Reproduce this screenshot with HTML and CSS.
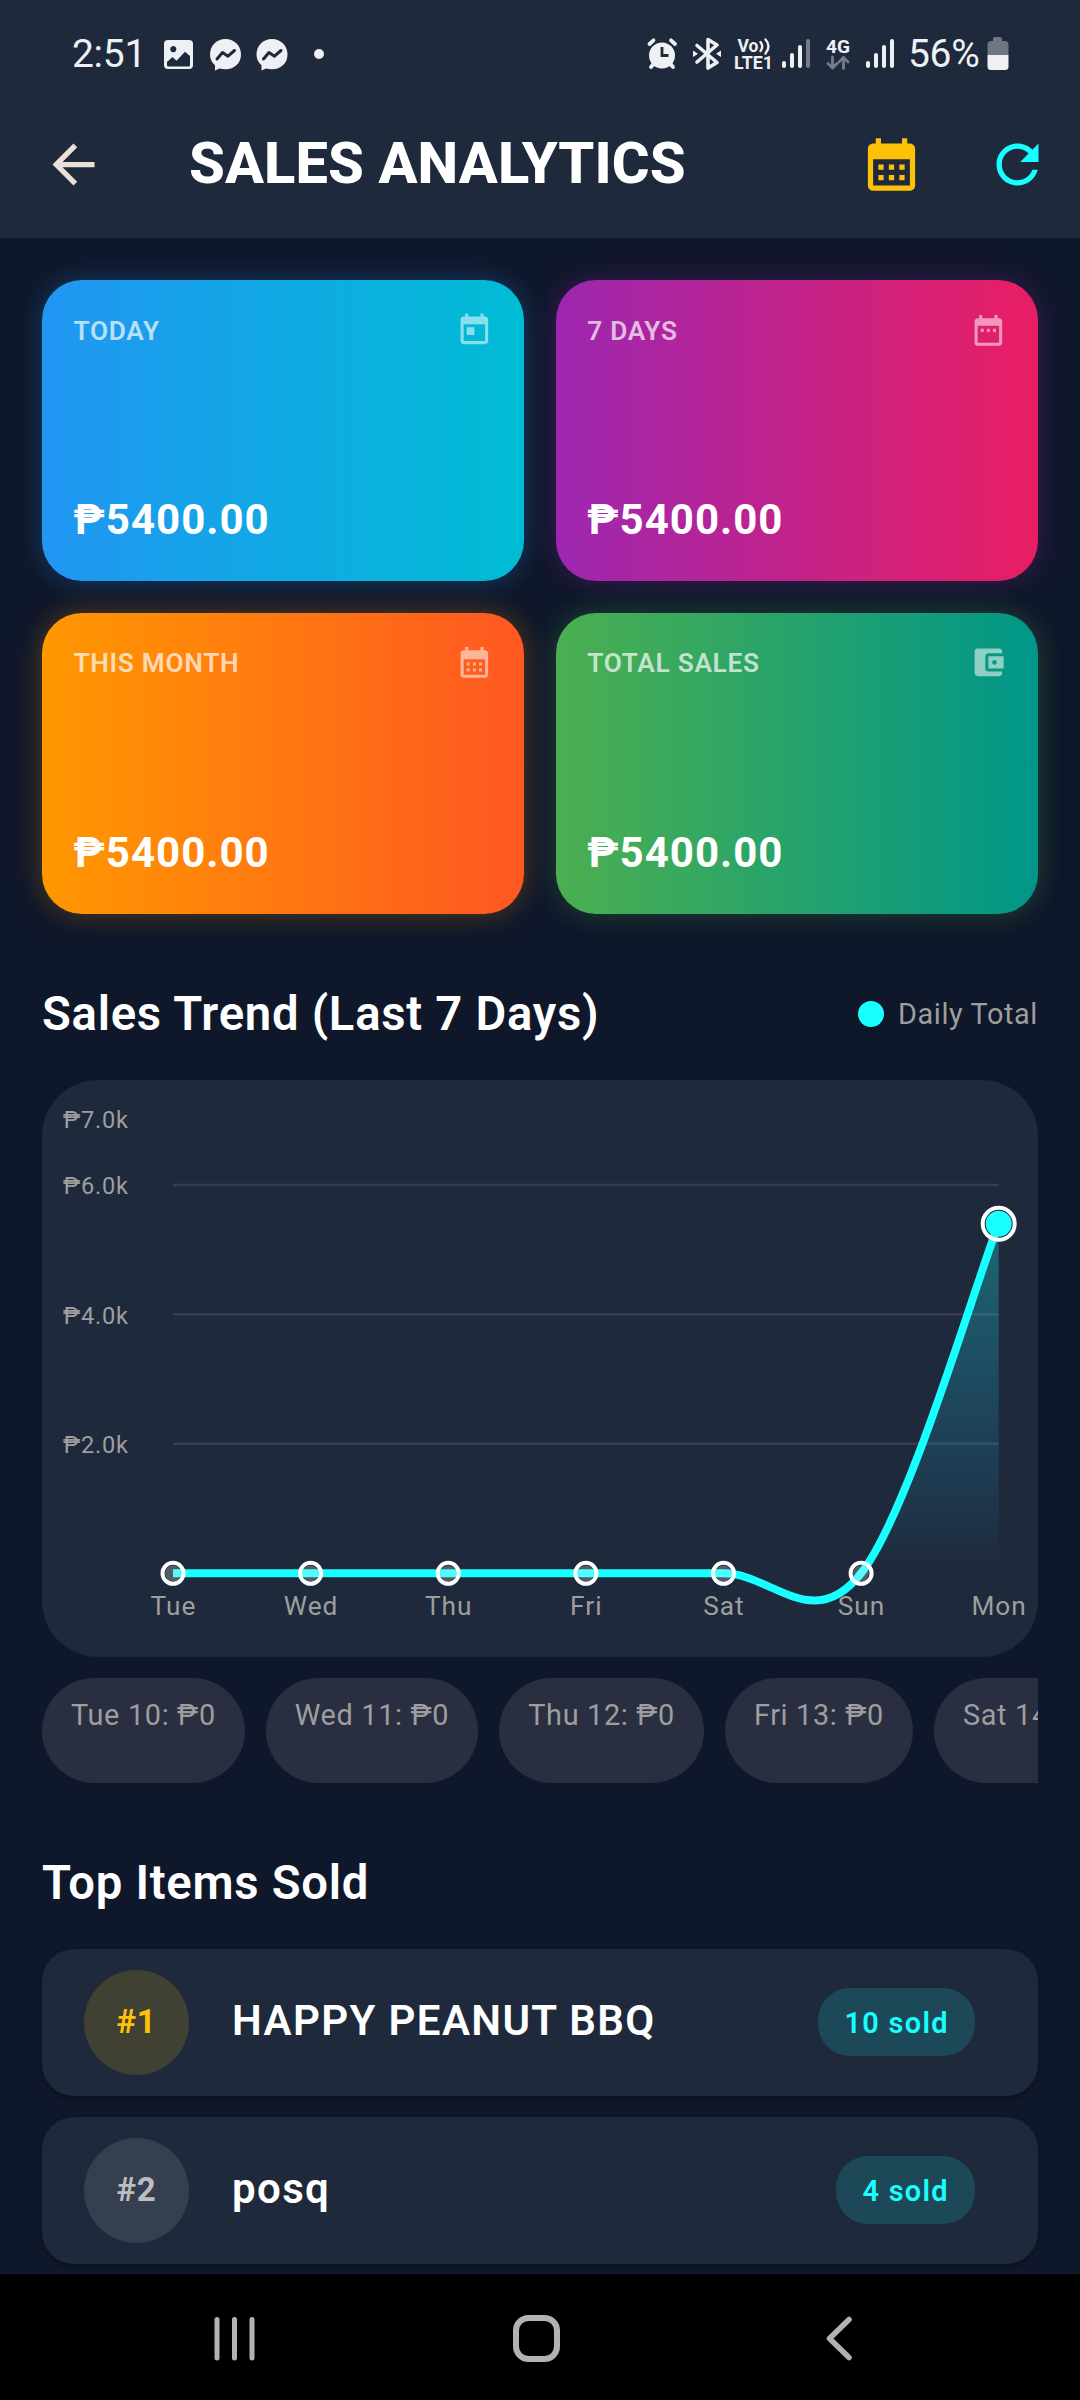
FILE: index.html
```html
<!DOCTYPE html>
<html lang="en">
<head>
<meta charset="utf-8">
<title>Sales Analytics</title>
<link rel="stylesheet" href="styles.css">
</head>
<body>
<div class="screen">
  <header class="top">
    <div class="status">
      <span class="clock">2:51</span>
      <svg class="status-left" width="170" height="40" viewBox="0 0 170 40">
        <path fill="#eef0f3" fill-rule="evenodd" d="M7 6h21a4 4 0 0 1 4 4v21a4 4 0 0 1-4 4H7a4 4 0 0 1-4-4V10a4 4 0 0 1 4-4zM12.300 12a3.100 3.100 0 1 0 .01 0zM6 28v3q0 1.500 1.500 1.500h20q1.500 0 1.500-1.500v-9l-5-4.300-8.500 9-4-3.700z"/>
        <g id="m1">
          <path fill="#eef0f3" d="M64.500 5C55.500 5 49 11.500 49 20.500c0 4.500 1.800 8 5 10.800v5.200l4.600-2q2.800.8 5.900.8C73.500 35.300 80 29 80 20.500S73.500 5 64.500 5z"/>
          <path fill="none" stroke="#1e293b" stroke-width="3" stroke-linejoin="round" stroke-linecap="round" d="M56 25l5.500-6.500 5.500 3.700L73.500 16.500"/>
        </g>
        <use href="#m1" x="46.500"/>
        <circle cx="158" cy="20" r="5" fill="#eef0f3"/>
      </svg>
      <svg class="status-right" width="256" height="40" viewBox="0 0 256 40" fill="#eef0f3">
        <circle cx="21" cy="21.500" r="13"/>
        <path stroke="#eef0f3" stroke-width="3.800" stroke-linecap="round" d="M8.500 10l4-3.700M34 10l-4-3.700M10 33l2.500-3M32 33l-2.500-3"/>
        <path fill="none" stroke="#1e293b" stroke-width="2.800" d="M21 13v8.500h6.500"/>
        <path fill="none" stroke="#eef0f3" stroke-width="3.600" stroke-linejoin="round" stroke-linecap="round" d="M56 11.500L76 28.500 67 34V5.500l9 5.500L56 28"/>
        <path d="M52 16.500l5 3.300-5 3.300zM80 16.500l-5 3.300 5 3.300z"/>
        <text class="tiny" x="96.500" y="18" textLength="21" lengthAdjust="spacingAndGlyphs" font-size="18">Vo</text>
        <path fill="none" stroke="#eef0f3" stroke-width="2.400" stroke-linecap="round" d="M119.500 8q3.500 4.500 0 9M124.500 5.500q6 6.500 0 14"/>
        <text class="tiny" x="93" y="35" textLength="39" lengthAdjust="spacingAndGlyphs" font-size="18.500">LTE1</text>
        <rect x="141" y="27" width="4" height="7" rx="2"/><rect x="149" y="19" width="4" height="15" rx="2"/><rect x="157" y="11" width="4" height="23" rx="2"/><rect x="165" y="5" width="4" height="29" rx="2" fill="#767d89"/>
        <text class="tiny" x="185" y="18.500" textLength="24" lengthAdjust="spacingAndGlyphs" font-size="19">4G</text>
        <path fill="none" stroke="#767d89" stroke-width="2.800" stroke-linecap="round" stroke-linejoin="round" d="M191.500 23v11M187 29.500l4.500 4.500 4.500-4.500M202.500 34.500v-11M198 28l4.500-4.500 4.500 4.500"/>
        <rect x="225" y="27" width="4" height="7" rx="2"/><rect x="233" y="19" width="4" height="15" rx="2"/><rect x="241" y="11" width="4" height="23" rx="2"/><rect x="249" y="5" width="4" height="29" rx="2"/>
      </svg>
      <span class="percent">56%</span>
      <svg class="battery" width="22" height="40" viewBox="0 0 22 40">
        <path fill="#6f7682" d="M8 3h5a2 2 0 0 1 2 2v2h3a3.500 3.500 0 0 1 3.500 3.500V21H.5V10.500A3.500 3.500 0 0 1 4 7h2V5a2 2 0 0 1 2-2z"/>
        <path fill="#eef0f3" d="M.5 21h21v11.500a3.500 3.500 0 0 1-3.500 3.500H4a3.500 3.500 0 0 1-3.500-3.500z"/>
      </svg>
    </div>
    <div class="appbar">
      <span class="bar-btn lead"><svg class="icon" viewBox="0 0 24 24" fill="#ebe0d6"><path d="M20 11H7.830l5.590-5.590L12 4l-8 8 8 8 1.410-1.410L7.830 13H20v-2z"/></svg></span>
      <h1>SALES ANALYTICS</h1>
      <span class="bar-btn"><svg class="icon" viewBox="0 0 24 24" fill="#ffc107"><path d="M19 4h-1V2h-2v2H8V2H6v2H5c-1.110 0-1.990.9-1.990 2L3 20a2 2 0 0 0 2 2h14c1.100 0 2-.9 2-2V6c0-1.100-.9-2-2-2zm0 16H5V10h14v10zM9 14H7v-2h2v2zm4 0h-2v-2h2v2zm4 0h-2v-2h2v2zm-8 4H7v-2h2v2zm4 0h-2v-2h2v2zm4 0h-2v-2h2v2z"/></svg></span>
      <span class="bar-btn"><svg class="icon" viewBox="0 0 24 24" fill="#18ffff"><path d="M17.650 6.350C16.200 4.900 14.210 4 12 4c-4.420 0-7.990 3.580-7.990 8s3.570 8 7.990 8c3.730 0 6.840-2.550 7.730-6h-2.080c-.82 2.330-3.040 4-5.650 4-3.310 0-6-2.690-6-6s2.690-6 6-6c1.660 0 3.140.69 4.220 1.780L13 11h7V4l-2.350 2.350z"/></svg></span>
    </div>
  </header>

  <main>
    <section class="cards">
      <article class="card today">
        <div class="card-head"><span>TODAY</span><svg class="mini" viewBox="0 0 24 24"><path d="M19 3h-1V1h-2v2H8V1H6v2H5c-1.110 0-1.990.9-1.990 2L3 19a2 2 0 0 0 2 2h14c1.100 0 2-.9 2-2V5c0-1.100-.9-2-2-2zm0 16H5V8h14v11zM7 10h5v5H7z"/></svg></div>
        <strong>₱5400.00</strong>
      </article>
      <article class="card week">
        <div class="card-head"><span>7 DAYS</span><svg class="mini" viewBox="0 0 24 24"><path d="M9 11H7v2h2v-2zm4 0h-2v2h2v-2zm4 0h-2v2h2v-2zm2-7h-1V2h-2v2H8V2H6v2H5c-1.110 0-1.990.9-1.990 2L3 20a2 2 0 0 0 2 2h14c1.100 0 2-.9 2-2V6c0-1.100-.9-2-2-2zm0 16H5V9h14v11z"/></svg></div>
        <strong>₱5400.00</strong>
      </article>
      <article class="card month">
        <div class="card-head"><span>THIS MONTH</span><svg class="mini" viewBox="0 0 24 24"><path d="M19 4h-1V2h-2v2H8V2H6v2H5c-1.110 0-1.990.9-1.990 2L3 20a2 2 0 0 0 2 2h14c1.100 0 2-.9 2-2V6c0-1.100-.9-2-2-2zm0 16H5V10h14v10zM9 14H7v-2h2v2zm4 0h-2v-2h2v2zm4 0h-2v-2h2v2zm-8 4H7v-2h2v2zm4 0h-2v-2h2v2zm4 0h-2v-2h2v2z"/></svg></div>
        <strong>₱5400.00</strong>
      </article>
      <article class="card total">
        <div class="card-head"><span>TOTAL SALES</span><svg class="mini" viewBox="0 0 24 24"><path d="M21 18v1c0 1.100-.9 2-2 2H5c-1.110 0-2-.9-2-2V5c0-1.100.89-2 2-2h14c1.100 0 2 .9 2 2v1h-9c-1.110 0-2 .9-2 2v8c0 1.100.89 2 2 2h9zm-9-2h10V8H12v8zm4-2.500c-.83 0-1.500-.67-1.500-1.500s.67-1.500 1.500-1.500 1.500.67 1.500 1.500-.67 1.500-1.500 1.500z"/></svg></div>
        <strong>₱5400.00</strong>
      </article>
    </section>

    <div class="section-head">
      <h2>Sales Trend (Last 7 Days)</h2>
      <span class="legend"><i class="dot"></i><span>Daily Total</span></span>
    </div>

    <section class="chart">
      <svg width="996" height="577" viewBox="0 0 996 577">
        <defs>
          <linearGradient id="area" gradientUnits="userSpaceOnUse" x1="0" y1="144" x2="0" y2="493">
            <stop offset="0" stop-color="#18ffff" stop-opacity=".3"/>
            <stop offset=".76" stop-color="#20c8ff" stop-opacity=".1"/>
            <stop offset="1" stop-color="#20c8ff" stop-opacity="0"/>
          </linearGradient>
        </defs>
        <path stroke="#fff" stroke-opacity=".1" stroke-width="2.600" d="M131 105h825.700M131 234.300h825.700M131 363.700h825.700"/>
        <path fill="url(#area)" d="M819.100 493.300C867.200 432.100 932.600 205 956.700 143.800V493.300z"/>
        <path fill="none" stroke="#18ffff" stroke-width="7.900" d="M131 493.300H681.500C729.600 493.300 771 554.500 819.100 493.300 867.200 432.100 932.600 205 956.700 143.800"/>
        <g class="ylabels">
          <text x="21" y="48">₱7.0k</text><text x="21" y="114">₱6.0k</text><text x="21" y="244">₱4.0k</text><text x="21" y="373">₱2.0k</text>
        </g>
        <g class="xlabels">
          <text x="131.500" y="535">Tue</text><text x="269.100" y="535">Wed</text><text x="406.700" y="535">Thu</text><text x="544.300" y="535">Fri</text><text x="681.900" y="535">Sat</text><text x="819.500" y="535">Sun</text><text x="957.100" y="535">Mon</text>
        </g>
        <g class="points">
          <circle cx="131" cy="493.300" r="7.900"/><circle cx="268.600" cy="493.300" r="7.900"/><circle cx="406.200" cy="493.300" r="7.900"/><circle cx="543.900" cy="493.300" r="7.900"/><circle cx="681.500" cy="493.300" r="7.900"/><circle cx="819.100" cy="493.300" r="7.900"/>
        </g>
        <g class="rings">
          <circle cx="131" cy="493.300" r="10.500"/><circle cx="268.600" cy="493.300" r="10.500"/><circle cx="406.200" cy="493.300" r="10.500"/><circle cx="543.900" cy="493.300" r="10.500"/><circle cx="681.500" cy="493.300" r="10.500"/><circle cx="819.100" cy="493.300" r="10.500"/>
          <circle cx="956.700" cy="143.800" r="16"/>
        </g>
        <circle cx="956.700" cy="143.800" r="13" fill="#18ffff"/>
      </svg>
    </section>

    <div class="chips">
      <span>Tue 10: ₱0</span><span>Wed 11: ₱0</span><span>Thu 12: ₱0</span><span>Fri 13: ₱0</span><span>Sat 14: ₱0</span>
    </div>

    <h2 class="items-title">Top Items Sold</h2>
    <section class="items">
      <div class="item"><span class="rank gold">#1</span><span class="name">HAPPY PEANUT BBQ</span><span class="sold">10 sold</span></div>
      <div class="item"><span class="rank">#2</span><span class="name">posq</span><span class="sold">4 sold</span></div>
    </section>
  </main>

  <nav class="nav">
    <svg width="1080" height="126" viewBox="0 0 1080 126" fill="none" stroke="#b2b2b2">
      <path stroke-width="5" stroke-linecap="round" d="M217 45.500v38.500M234.500 45.500v38.500M252 45.500v38.500"/>
      <rect x="516" y="44" width="41" height="41" rx="12.500" stroke-width="6"/>
      <path stroke-width="5.500" stroke-linecap="round" stroke-linejoin="round" d="M849 45.500L829.500 64.500 849 83.500"/>
    </svg>
  </nav>
</div>
</body>
</html>
```
FILE: styles.css
```css
* { box-sizing: border-box; margin: 0; padding: 0; }
body { background: #0f172a; font-family: Roboto, "Noto Sans", sans-serif; color: #fff; }
svg { display: block; flex: none; }
.screen { width: 1080px; height: 2400px; display: flex; flex-direction: column; overflow: hidden; }

.top { background: #1e293b; height: 238px; flex: none; }
.status { height: 91px; padding: 17px 0 0 72px; display: flex; align-items: center; color: #eef0f3; font-size: 39px; line-height: 46px; }
.clock { width: 89px; letter-spacing: -.3px; }
.status-right { margin-left: 310px; }
.percent { width: 79px; margin-left: 11px; letter-spacing: -.3px; white-space: nowrap; }
.tiny { font-weight: 700; }
.appbar { height: 147px; display: flex; align-items: center; }
.bar-btn { width: 126px; display: flex; justify-content: center; }
.bar-btn.lead { width: 147px; }
.icon { width: 63px; height: 63px; }
h1 { flex: 1; padding: 0 0 3px 42px; font-size: 57.750px; font-weight: 800; letter-spacing: .1px; line-height: 72px; white-space: nowrap; }

main { flex: 1; min-height: 0; overflow: hidden; padding: 42px 42px 0; }
.cards { display: grid; grid-template-columns: 1fr 1fr; grid-auto-rows: 301.400px; gap: 31.500px; }
.card { border-radius: 40px; padding: 31.500px; display: flex; flex-direction: column; justify-content: space-between; }
.card-head { display: flex; justify-content: space-between; }
.card-head span { font-size: 26.250px; line-height: 39px; font-weight: 600; letter-spacing: .7px; color: rgba(255,255,255,.7); }
.card strong { font-size: 42px; line-height: 60px; font-weight: 700; letter-spacing: 1px; }
.mini { width: 36.750px; height: 36.750px; fill: rgba(255,255,255,.54); }
.today { background: linear-gradient(90deg, #2196f3, #00bcd4); box-shadow: 0 0 28px rgba(33,150,243,.3); }
.week { background: linear-gradient(90deg, #9c27b0, #e91e63); box-shadow: 0 0 28px rgba(156,39,176,.3); }
.month { background: linear-gradient(90deg, #ff9800, #ff5722); box-shadow: 0 0 28px rgba(255,152,0,.3); }
.total { background: linear-gradient(90deg, #4caf50, #009688); box-shadow: 0 0 28px rgba(76,175,80,.3); }

.section-head { margin: 64px 0 30px; height: 72px; display: flex; justify-content: space-between; align-items: center; }
h2 { font-size: 47.250px; line-height: 72px; font-weight: 600; letter-spacing: .730px; }
.legend { display: flex; align-items: center; gap: 14px; font-size: 28.875px; color: #9e9e9e; letter-spacing: .6px; }
.dot { width: 26px; height: 26px; border-radius: 50%; background: #18ffff; }

.chart { height: 577px; border-radius: 56px; background: #1e293b; }
.ylabels, .xlabels { fill: #9e9e9e; }
.ylabels { font-size: 23.600px; letter-spacing: .750px; }
.xlabels { font-size: 26.250px; text-anchor: middle; letter-spacing: 1px; }
.points { fill: rgba(255,255,255,.24); }
.rings { fill: none; stroke: #fff; stroke-width: 4; }

.chips { margin-top: 21px; height: 105px; display: flex; gap: 21px; overflow: hidden; }
.chips span { flex: none; padding: 16.500px 29px; border-radius: 52.500px; background: #292f40; font-size: 28.875px; line-height: 41px; letter-spacing: .660px; color: #9e9e9e; white-space: nowrap; }

.items-title { margin: 64px 0 28.500px; height: 73px; }
.items { display: grid; gap: 21px; }
.item { height: 147px; border-radius: 32px; background: #1e293b; box-shadow: 0 3px 5px rgba(0,0,0,.3); padding: 0 63px 0 42px; display: flex; align-items: center; }
.rank { width: 105px; height: 105px; border-radius: 50%; display: flex; align-items: center; justify-content: center; padding-bottom: 1px; background: #353f4f; color: #bdbdbd; font-size: 33px; font-weight: 700; letter-spacing: .7px; }
.rank.gold { background: #414133; color: #ffc107; }
.name { flex: 1; margin-left: 43px; padding-bottom: 3px; font-size: 42px; font-weight: 600; letter-spacing: 1.370px; }
.sold { height: 68px; line-height: 70px; padding: 0 26.250px; border-radius: 32px; background: #1d4858; color: #18ffff; font-size: 28.875px; font-weight: 600; letter-spacing: 1.300px; }

.nav { height: 126px; flex: none; background: #000; }
```
